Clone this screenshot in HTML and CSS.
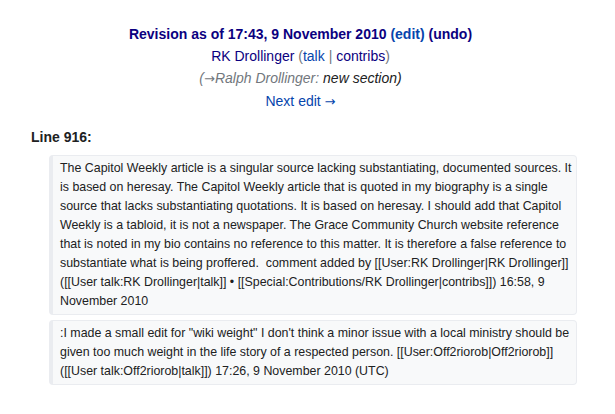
FILE: index.html
```html
<!DOCTYPE html>
<html>
<head>
<meta charset="utf-8">
<link rel="stylesheet" href="styles.css">
</head>
<body>
<div class="page">
  <div class="rev-header">
    <div class="rev-title"><a class="visited" href="#">Revision as of 17:43, 9 November 2010</a> <a class="link" href="#">(edit)</a> <a class="visited" href="#">(undo)</a></div>
    <div class="rev-user"><a class="visited" href="#">RK Drollinger</a> <span class="muted">(</span><a class="link" href="#">talk</a> <span class="muted">|</span> <a class="visited" href="#">contribs</a><span class="muted">)</span></div>
    <div class="rev-comment"><span class="muted">(</span><a class="autocomment" href="#"><span class="arrow">→</span>Ralph Drollinger:</a> new section)</div>
    <div class="rev-next"><a class="link" href="#">Next edit <span class="arrow">→</span></a></div>
  </div>
  <div class="lineno">Line 916:</div>
  <div class="context-list">
    <div class="context">The Capitol Weekly article is a singular source lacking substantiating, documented sources. It is based on heresay. The Capitol Weekly article that is quoted in my biography is a single source that lacks substantiating quotations. It is based on heresay. I should add that Capitol Weekly is a tabloid, it is not a newspaper. The Grace Community Church website reference that is noted in my bio contains no reference to this matter. It is therefore a false reference to substantiate what is being proffered.&nbsp; comment added by [[User:RK Drollinger|RK Drollinger]] ([[User talk:RK Drollinger|talk]] • [[Special:Contributions/RK Drollinger|contribs]]) 16:58, 9 November 2010</div>
    <div class="context">:I made a small edit for "wiki weight" I don't think a minor issue with a local ministry should be given too much weight in the life story of a respected person. [[User:Off2riorob|Off2riorob]] ([[User talk:Off2riorob|talk]]) 17:26, 9 November 2010 (UTC)</div>
  </div>
</div>
</body>
</html>
```
FILE: styles.css
```css
html, body {
  margin: 0;
  padding: 0;
  background: #ffffff;
}
body {
  font-family: "Liberation Sans", Arial, sans-serif;
  color: #202122;
}
a {
  text-decoration: none;
}
.page {
  width: 601px;
  padding-top: 23px;
}
.rev-header {
  text-align: center;
  font-size: 14px;
  line-height: 22px;
}
.rev-title {
  font-weight: bold;
}
.visited {
  color: #0b0080;
}
.link {
  color: #0645ad;
}
.muted {
  color: #72777d;
}
.arrow {
  font-family: "DejaVu Sans", sans-serif;
  font-size: 13px;
}
.rev-comment {
  font-style: italic;
  color: #202122;
}
.autocomment {
  color: #72777d;
}
.lineno {
  font-weight: bold;
  font-size: 14px;
  line-height: 20px;
  margin: 14px 0 0 31px;
}
.context-list {
  display: flex;
  flex-direction: column;
  gap: 5px;
  margin: 8px 0 0 49px;
  width: 528px;
}
.context {
  background: #f8f9fa;
  border: 1px solid #eaecf0;
  border-left-width: 4px;
  border-radius: 4px;
  font-size: 12.4px;
  line-height: 19px;
  padding: 3px 4px 3px 7px;
  color: #202122;
}
```
